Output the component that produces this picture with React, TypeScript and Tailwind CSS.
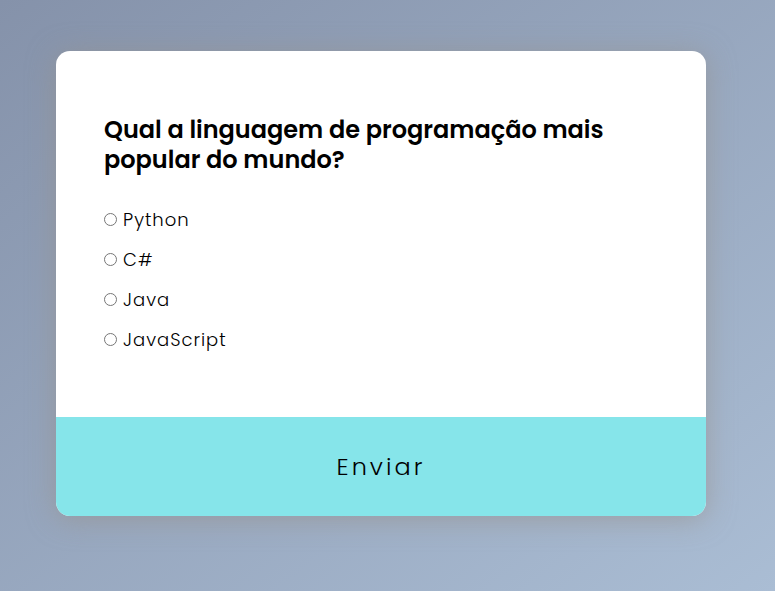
import { useState, type FormEvent } from "react";

const options = ["Python", "C#", "Java", "JavaScript"];

export default function App() {
  const [answer, setAnswer] = useState<string | null>(null);

  const submit = (event: FormEvent) => event.preventDefault();

  return (
    <main className="min-h-screen bg-linear-to-br from-[#8592aa] to-[#aabdd4] py-[51px] pr-[69px] pl-14 font-[Poppins,Inter,sans-serif] text-black">
      <form
        onSubmit={submit}
        className="mx-auto w-full max-w-[650px] overflow-hidden rounded-[14px] bg-white shadow-[0_3px_28px_rgba(150,146,140,0.65)]"
      >
        <fieldset className="px-12 pt-16 pb-[57px]">
          <legend className="contents">
            <span className="block text-2xl leading-[30px] font-semibold">
              Qual a linguagem de programação mais popular do mundo?
            </span>
          </legend>
          <div className="mt-[25px]">
            {options.map((option) => (
              <label key={option} className="flex h-10 items-center gap-1.5 text-lg font-light tracking-[1px]">
                <input
                  type="radio"
                  name="language"
                  value={option}
                  checked={answer === option}
                  onChange={() => setAnswer(option)}
                  className="-mt-0.5 size-[13px] shrink-0"
                />
                <span>{option}</span>
              </label>
            ))}
          </div>
        </fieldset>
        <button
          type="submit"
          className="block h-[99px] w-full cursor-pointer bg-[#86e5ea] text-2xl font-light tracking-[3px]"
        >
          Enviar
        </button>
      </form>
    </main>
  );
}
